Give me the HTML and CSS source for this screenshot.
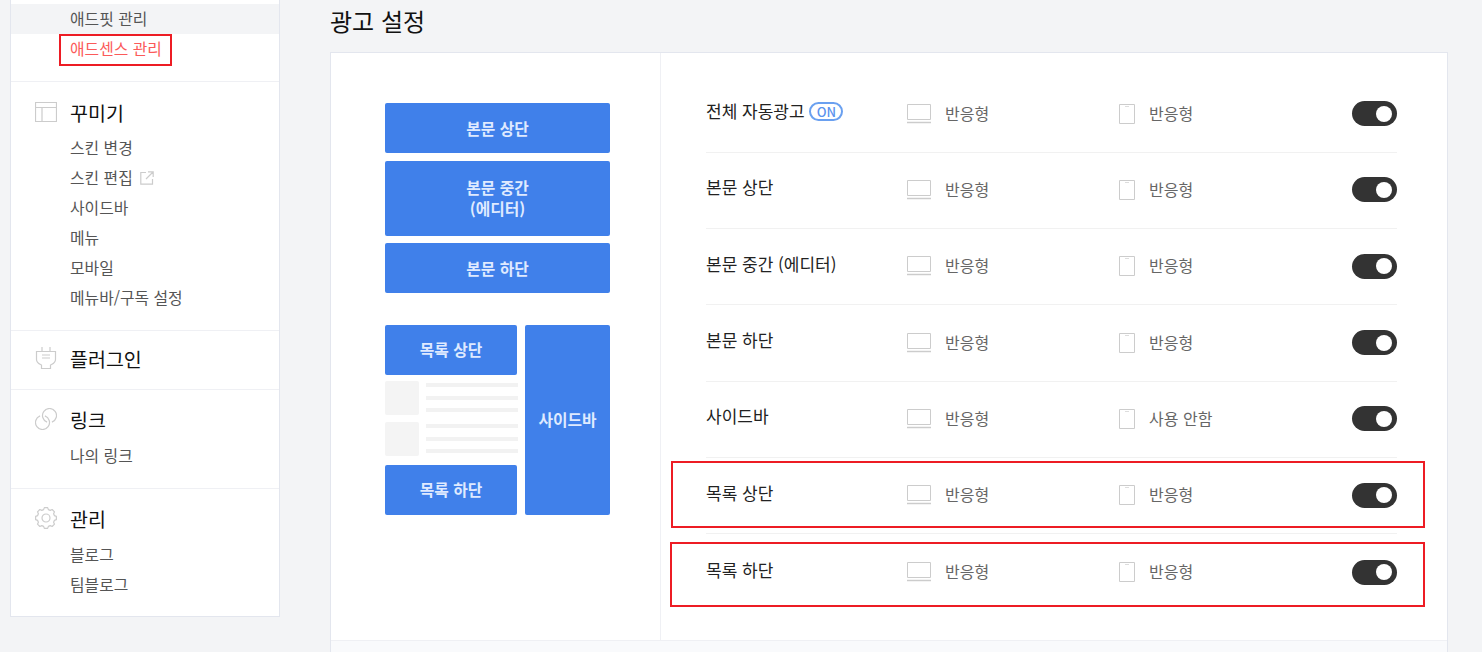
FILE: index.html
```html
<!DOCTYPE html>
<html lang="ko">
<head>
    <meta charset="UTF-8">
    <title>광고 설정</title>
    <link rel="stylesheet" href="styles.css">
</head>
<body>

<div class="page">
    <!-- Sidebar -->
    <nav class="sidebar">
        <section class="menu-group group-ad">
            <a class="sub-item active">애드핏 관리</a>
            <a class="sub-item current">애드센스 관리<span class="mark-link"></span></a>
        </section>

        <section class="menu-group group-skin">
            <h3 class="menu-title">
                <svg class="menu-icon" viewBox="0 0 22 22"><path d="M.5 1.500h21v19H.5zM.5 6.500h21M7 6.500v14"/></svg>
                꾸미기
            </h3>
            <a class="sub-item">스킨 변경</a>
            <a class="sub-item">스킨 편집
                <svg class="ext-icon" viewBox="0 0 14 14"><path d="M6 1.500H.8v11.700h11.700V8M8 .8h5.200V6M13 1 6 8"/></svg>
            </a>
            <a class="sub-item">사이드바</a>
            <a class="sub-item">메뉴</a>
            <a class="sub-item">모바일</a>
            <a class="sub-item">메뉴바/구독 설정</a>
        </section>

        <section class="menu-group group-plugin">
            <h3 class="menu-title">
                <svg class="menu-icon" viewBox="0 0 22 22"><path d="M7 0v4.500M15 0v4.500M1.500 4.500h19v8c0 2-2 4-4 5l-1 .5v3.500h-9V18l-1-.5c-2-1-4-3-4-5zM7 8h8M7 11h8"/></svg>
                플러그인
            </h3>
        </section>

        <section class="menu-group group-link">
            <h3 class="menu-title">
                <svg class="menu-icon" viewBox="0 0 22 22"><path d="M9.900 7.920A7 7 0 1 1 5.100 7.920M12.100 14.080A7 7 0 1 1 16.900 14.080"/></svg>
                링크
            </h3>
            <a class="sub-item">나의 링크</a>
        </section>

        <section class="menu-group group-manage">
            <h3 class="menu-title">
                <svg class="menu-icon" viewBox="0 0 22 22"><path stroke-linejoin="round" d="M19.360 8.600 21.370 9.360V12.640L19.360 13.400 18.610 15.220 19.490 17.170 17.170 19.490 15.220 18.610 13.400 19.360 12.640 21.370H9.360L8.600 19.360 6.780 18.610 4.830 19.490 2.510 17.170 3.390 15.220 2.640 13.400.63 12.640V9.360L2.640 8.600 3.390 6.780 2.510 4.830 4.830 2.510 6.780 3.390 8.600 2.640 9.360.63H12.640L13.400 2.640 15.220 3.390 17.170 2.510 19.490 4.830 18.610 6.780z"/><circle cx="11" cy="11" r="4"/></svg>
                관리
            </h3>
            <a class="sub-item">블로그</a>
            <a class="sub-item">팀블로그</a>
        </section>
    </nav>

    <!-- Main -->
    <main class="content">
        <h2 class="page-title">광고 설정</h2>

        <div class="panel">
            <div class="panel-body">
                <!-- Placement diagram -->
                <div class="diagram">
                    <div class="slot slot-top">본문 상단</div>
                    <div class="slot slot-mid">본문 중간<br>(에디터)</div>
                    <div class="slot slot-bottom">본문 하단</div>

                    <div class="list-area">
                        <div class="list-col">
                            <div class="slot slot-list">목록 상단</div>
                            <div class="post">
                                <div class="thumb"></div>
                                <div class="lines"><i></i><i></i><i></i></div>
                            </div>
                            <div class="post">
                                <div class="thumb"></div>
                                <div class="lines"><i></i><i></i><i></i></div>
                            </div>
                            <div class="slot slot-list slot-list-end">목록 하단</div>
                        </div>
                        <div class="slot slot-side">사이드바</div>
                    </div>
                </div>

                <!-- Settings -->
                <div class="settings">
                    <div class="row">
                        <div class="row-name">전체 자동광고 <span class="badge-on">ON</span></div>
                        <svg class="pc-icon" viewBox="0 0 24 20"><path d="M.5.500h23v15H.5z"/><path class="bar" d="M0 18.500h24"/></svg>
                        <div class="row-value pc-value">반응형</div>
                        <svg class="mobile-icon" viewBox="0 0 16 20"><path d="M.5.500h15v19H.5z"/><path class="tick" d="M6 2.500h4"/></svg>
                        <div class="row-value">반응형</div>
                        <div class="toggle"></div>
                    </div>
                    <div class="row">
                        <div class="row-name">본문 상단</div>
                        <svg class="pc-icon" viewBox="0 0 24 20"><path d="M.5.500h23v15H.5z"/><path class="bar" d="M0 18.500h24"/></svg>
                        <div class="row-value pc-value">반응형</div>
                        <svg class="mobile-icon" viewBox="0 0 16 20"><path d="M.5.500h15v19H.5z"/><path class="tick" d="M6 2.500h4"/></svg>
                        <div class="row-value">반응형</div>
                        <div class="toggle"></div>
                    </div>
                    <div class="row">
                        <div class="row-name">본문 중간 (에디터)</div>
                        <svg class="pc-icon" viewBox="0 0 24 20"><path d="M.5.500h23v15H.5z"/><path class="bar" d="M0 18.500h24"/></svg>
                        <div class="row-value pc-value">반응형</div>
                        <svg class="mobile-icon" viewBox="0 0 16 20"><path d="M.5.500h15v19H.5z"/><path class="tick" d="M6 2.500h4"/></svg>
                        <div class="row-value">반응형</div>
                        <div class="toggle"></div>
                    </div>
                    <div class="row">
                        <div class="row-name">본문 하단</div>
                        <svg class="pc-icon" viewBox="0 0 24 20"><path d="M.5.500h23v15H.5z"/><path class="bar" d="M0 18.500h24"/></svg>
                        <div class="row-value pc-value">반응형</div>
                        <svg class="mobile-icon" viewBox="0 0 16 20"><path d="M.5.500h15v19H.5z"/><path class="tick" d="M6 2.500h4"/></svg>
                        <div class="row-value">반응형</div>
                        <div class="toggle"></div>
                    </div>
                    <div class="row">
                        <div class="row-name">사이드바</div>
                        <svg class="pc-icon" viewBox="0 0 24 20"><path d="M.5.500h23v15H.5z"/><path class="bar" d="M0 18.500h24"/></svg>
                        <div class="row-value pc-value">반응형</div>
                        <svg class="mobile-icon" viewBox="0 0 16 20"><path d="M.5.500h15v19H.5z"/><path class="tick" d="M6 2.500h4"/></svg>
                        <div class="row-value">사용 안함</div>
                        <div class="toggle"></div>
                    </div>
                    <div class="row">
                        <div class="row-name">목록 상단</div>
                        <svg class="pc-icon" viewBox="0 0 24 20"><path d="M.5.500h23v15H.5z"/><path class="bar" d="M0 18.500h24"/></svg>
                        <div class="row-value pc-value">반응형</div>
                        <svg class="mobile-icon" viewBox="0 0 16 20"><path d="M.5.500h15v19H.5z"/><path class="tick" d="M6 2.500h4"/></svg>
                        <div class="row-value">반응형</div>
                        <div class="toggle"></div>
                        <span class="mark-row mark-first"></span>
                    </div>
                    <div class="row">
                        <div class="row-name">목록 하단</div>
                        <svg class="pc-icon" viewBox="0 0 24 20"><path d="M.5.500h23v15H.5z"/><path class="bar" d="M0 18.500h24"/></svg>
                        <div class="row-value pc-value">반응형</div>
                        <svg class="mobile-icon" viewBox="0 0 16 20"><path d="M.5.500h15v19H.5z"/><path class="tick" d="M6 2.500h4"/></svg>
                        <div class="row-value">반응형</div>
                        <div class="toggle"></div>
                        <span class="mark-row mark-second"></span>
                    </div>
                </div>
            </div>
            <div class="panel-foot"></div>
        </div>
    </main>
</div>

</body>
</html>
```

FILE: styles.css
```css
html, body {
    margin: 0;
    padding: 0;
    height: 652px;
    overflow: hidden;
    background-color: #f3f4f6;
}
body {
    font-family: "Noto Sans CJK KR", "Noto Sans", sans-serif;
    color: #333;
}
.page {
    display: flex;
    align-items: flex-start;
    gap: 50px;
    padding-left: 10px;
}

/* Sidebar */
.sidebar {
    width: 268px;
    background-color: #fff;
    border: 1px solid #e3e6ee;
    border-top: none;
    padding-top: 4px;
}
.menu-group {
    border-bottom: 1px solid #eff0f4;
    box-sizing: border-box;
}
.menu-group:last-child {
    border-bottom: none;
}
.group-ad { height: 78px; }
.group-skin { height: 249px; padding-top: 14px; }
.group-plugin { height: 59px; padding-top: 11px; }
.group-link { height: 99px; padding-top: 13px; }
.group-manage { height: 127px; padding-top: 13px; }
.group-link .menu-title { margin-bottom: 6px; }
.group-manage .menu-title { margin-bottom: 6px; }
.menu-title {
    display: flex;
    align-items: center;
    margin: 0 0 5px;
    height: 32px;
    padding-left: 24px;
    font-size: 19.500px;
    font-weight: 400;
    color: #111;
}
.menu-icon {
    width: 22px;
    height: 22px;
    margin-right: 13px;
    fill: none;
    stroke: #ccc;
    stroke-width: 1.200;
}
.sub-item {
    display: block;
    position: relative;
    height: 30px;
    line-height: 30px;
    padding-left: 59px;
    font-size: 15.850px;
    color: #555;
}
.sub-item.active {
    background-color: #f3f4f6;
}
.sub-item.current {
    color: #fb5a5a;
}
.ext-icon {
    width: 14px;
    height: 14px;
    margin-left: 3px;
    vertical-align: -1px;
    fill: none;
    stroke: #ccc;
    stroke-width: 1.200;
}
.mark-link {
    position: absolute;
    left: 48px;
    top: 0;
    width: 109px;
    height: 28px;
    border: 2px solid #ed1c24;
}

/* Main */
.content {
    width: 1118px;
}
.page-title {
    margin: 0;
    height: 52px;
    line-height: 42px;
    font-size: 24px;
    font-weight: 400;
    color: #111;
}
.panel {
    background-color: #fff;
    border: 1px solid #e3e6ee;
    border-bottom: none;
}
.panel-body {
    display: flex;
    height: 587px;
}
.panel-foot {
    height: 12px;
    background-color: #f9fafc;
    border-top: 1px solid #eff0f4;
}

/* Diagram */
.diagram {
    width: 330px;
    box-sizing: border-box;
    padding: 50px 50px 0 54px;
    border-right: 1px solid #eff0f4;
}
.slot {
    display: flex;
    align-items: center;
    justify-content: center;
    box-sizing: border-box;
    text-align: center;
    background-color: #4080ea;
    border-radius: 2px;
    color: #dfeaff;
    font-size: 15.800px;
    font-weight: 700;
    line-height: 21px;
}
.slot-top { height: 50px; margin-bottom: 8px; }
.slot-mid { height: 75px; margin-bottom: 7px; padding-bottom: 1px; }
.slot-bottom { height: 50px; margin-bottom: 32px; }
.list-area {
    display: flex;
    gap: 8px;
    height: 190px;
}
.list-col {
    width: 132px;
}
.slot-list {
    height: 50px;
    margin-bottom: 6px;
    padding-bottom: 1px;
}
.slot-list-end {
    margin: 9px 0 0;
}
.slot-side {
    width: 85px;
    padding-bottom: 1px;
}
.post {
    display: flex;
    gap: 7px;
    height: 34px;
    margin-bottom: 7px;
}
.post + .slot-list-end {
    margin-top: 9px;
}
.thumb {
    width: 34px;
    height: 34px;
    background-color: #f4f4f4;
    border-radius: 2px;
}
.lines {
    flex: 1;
    margin-right: -1px;
    padding-top: 2px;
}
.lines i {
    display: block;
    height: 4px;
    margin-bottom: 8.500px;
    background-color: #f2f2f2;
}

/* Settings rows */
.settings {
    width: 691px;
    margin-left: 45px;
    padding-top: 23.500px;
}
.row {
    display: flex;
    align-items: center;
    position: relative;
    box-sizing: border-box;
    height: 76.330px;
    padding-bottom: 1px;
    border-bottom: 1px solid #f1f1f1;
}
.row:last-child {
    border-bottom: none;
}
.row-name {
    width: 201px;
    padding-bottom: 6px;
    font-size: 17px;
    color: #222;
}
.badge-on {
    display: inline-block;
    box-sizing: border-box;
    width: 34px;
    height: 19px;
    line-height: 15px;
    border: 2px solid #6aa0f0;
    border-radius: 10px;
    vertical-align: 1px;
    text-align: center;
    font-size: 13px;
    font-weight: 500;
    color: #5b93ee;
}
.pc-icon {
    width: 24px;
    height: 20px;
    margin-right: 14px;
    fill: none;
    stroke: #ccc;
}
.mobile-icon {
    width: 16px;
    height: 20px;
    margin-right: 14px;
    fill: none;
    stroke: #ccc;
}
.pc-icon .bar {
    stroke-width: 1.500;
}
.mobile-icon .tick {
    stroke: #ddd;
}
.row-value {
    font-size: 16px;
    color: #666;
    padding-bottom: 2px;
}
.pc-value {
    width: 174px;
}
.toggle {
    position: relative;
    width: 45px;
    height: 25px;
    margin-left: auto;
    background-color: #333;
    border-radius: 13px;
}
.toggle::after {
    content: "";
    position: absolute;
    top: 4.500px;
    right: 5px;
    width: 16px;
    height: 16px;
    background-color: #fff;
    border-radius: 50%;
}

/* Red annotation boxes */
.mark-row {
    position: absolute;
    border: 2px solid #ed1c24;
    box-sizing: border-box;
}
.mark-first {
    left: -35px;
    right: -28px;
    top: 3px;
    height: 67px;
}
.mark-second {
    left: -36px;
    right: -28px;
    top: 7.600px;
    height: 65px;
}
```
